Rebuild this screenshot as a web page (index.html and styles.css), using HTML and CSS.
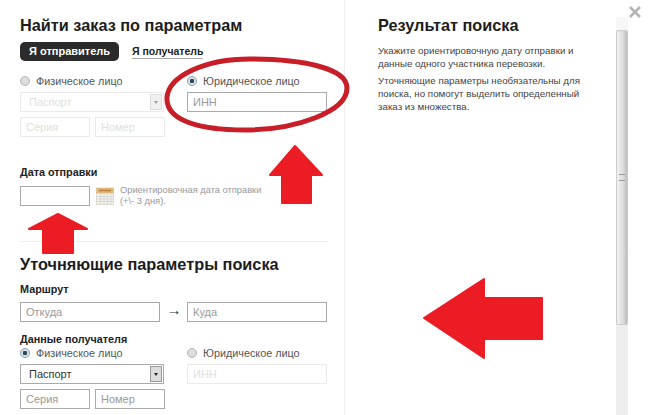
FILE: index.html
```html
<!DOCTYPE html>
<html>

<head>
  <title>Поиск заказа</title>
  <link rel="stylesheet" href="styles.css">
</head>

<body>
  <div class="dialog">
    <div class="search-form">
      <h1>Найти заказ по параметрам</h1>

      <div class="tabs">
        <span class="tab tab-active">Я отправитель</span>
        <span class="tab-link">Я получатель</span>
      </div>

      <div class="party-grid party-first">
        <div class="party">
          <div class="option option-off"><span class="radio"></span>Физическое лицо</div>
          <div class="select select-off">
            <span class="select-value">Паспорт</span>
            <span class="select-arrow"></span>
          </div>
          <div class="field-row">
            <input type="text" class="field field-off field-short" placeholder="Серия">
            <input type="text" class="field field-off field-short" placeholder="Номер">
          </div>
        </div>
        <div class="party">
          <div class="option"><span class="radio radio-on"></span>Юридическое лицо</div>
          <input type="text" class="field field-wide" placeholder="ИНН">
        </div>
      </div>

      <div class="label label-date">Дата отправки</div>
      <div class="date-row">
        <input type="text" class="field field-short">
        <svg class="calendar" width="18" height="18" viewBox="0 0 18 18">
          <rect x="0.5" y="1" width="17" height="16.5" fill="#f3f2ec" stroke="#dddad0" />
          <rect x="0.5" y="1" width="17" height="5.5" fill="#e0b878" />
          <path d="M3 3.500h12" stroke="#bd8040" stroke-width="1.5" />
          <path d="M1 9.500h16M1 12h16M1 14.500h16M4.500 7v10M8 7v10M11.500 7v10M15 7v10" stroke="#d8d8d8" stroke-width="1" />
        </svg>
        <div class="date-hint">Ориентировочная дата отправки<br>(+\- 3 дня).</div>
      </div>

      <div class="divider"></div>

      <h1 class="title-second">Уточняющие параметры поиска</h1>

      <div class="label label-route">Маршрут</div>
      <div class="route-row">
        <input type="text" class="field field-wide" placeholder="Откуда">
        <span class="route-arrow">→</span>
        <input type="text" class="field field-wide" placeholder="Куда">
      </div>

      <div class="label label-receiver">Данные получателя</div>
      <div class="party-grid">
        <div class="party">
          <div class="option"><span class="radio radio-on"></span>Физическое лицо</div>
          <div class="select">
            <span class="select-value">Паспорт</span>
            <span class="select-arrow"></span>
          </div>
          <div class="field-row">
            <input type="text" class="field field-short" placeholder="Серия">
            <input type="text" class="field field-short" placeholder="Номер">
          </div>
        </div>
        <div class="party">
          <div class="option option-off"><span class="radio"></span>Юридическое лицо</div>
          <input type="text" class="field field-off field-wide" placeholder="ИНН">
        </div>
      </div>
    </div>

    <div class="result">
      <h2>Результат поиска</h2>
      <p>Укажите ориентировочную дату отправки и данные одного участника перевозки.</p>
      <p>Уточняющие параметры необязательны для поиска, но помогут выделить определенный заказ из множества.</p>
    </div>

    <div class="scrollbar">
      <div class="scroll-btn"></div>
      <div class="scroll-thumb"><span class="scroll-grip"></span></div>
    </div>

    <div class="close-col">
      <svg width="12" height="12" viewBox="0 0 12 12">
        <path d="M1 1l10 10M11 1L1 11" stroke="#b3b3b3" stroke-width="2.500" />
      </svg>
    </div>
  </div>

  <!-- red marks drawn over the screenshot -->
  <svg class="marks" width="650" height="415" viewBox="0 0 650 415">
    <path class="ring" d="M167 98C168 76 205 59 250 59C302 59 347 68 347 88C347 112 295 130 245 130C198 130 166 120 167 98Z" />
    <path class="arrow" d="M295 146L322 175H311V203H282V175H270Z" />
    <path class="arrow" d="M58 214L87 229H73V253H43V229H29Z" />
    <path class="arrow" d="M424 318L484 279V298H542V339H484V358Z" />
  </svg>
</body>

</html>
```

FILE: styles.css
```css
body {
  margin: 0;
  width: 650px;
  height: 415px;
  overflow: hidden;
  position: relative;
  font-family: "Liberation Sans", Arial, sans-serif;
  color: #222;
  background-color: #fff;
}

h1 {
  font-size: 16.300px;
  line-height: 22px;
  font-weight: 700;
  margin: 0;
  color: #1c1c1c;
}

h2 {
  font-size: 16.300px;
  line-height: 22px;
  font-weight: 700;
  margin: 0 0 9px;
  color: #1c1c1c;
}

.dialog {
  display: flex;
  height: 415px;
}

.search-form {
  flex: none;
  width: 324px;
  padding: 14px 0 0 20px;
}

.tabs {
  display: flex;
  align-items: center;
  margin-top: 6px;
  gap: 13px;
}

.tab {
  font-size: 11px;
  font-weight: 700;
  line-height: 19px;
  padding: 0 9px;
}

.tab-active {
  color: #fff;
  background-color: #2b2b2b;
  border-radius: 5px;
}

.tab-link {
  font-size: 10.500px;
  font-weight: 700;
  line-height: 14px;
  border-bottom: 1px solid #aaa;
  color: #222;
}

.party-grid {
  display: grid;
  grid-template-columns: 144px 139px;
  column-gap: 23px;
}

.party-first {
  margin-top: 13px;
  height: 74px;
}

.option {
  display: flex;
  align-items: center;
  height: 14px;
  font-size: 10.800px;
  color: #555;
  margin-bottom: 4px;
}

.option-off .radio {
  background-color: #ddd;
}

.radio {
  width: 8px;
  height: 8px;
  border: 1px solid #b5b5b5;
  border-radius: 50%;
  margin-right: 6px;
}

.radio-on {
  background: radial-gradient(circle, #2d4a55 0, #2d4a55 2px, #d8e2e8 2.500px);
  border-color: #8aa0ad;
}

.field {
  display: block;
  box-sizing: border-box;
  height: 20px;
  padding: 0 5px;
  border: 1px solid #aaa;
  font-family: inherit;
  font-size: 11px;
  background-color: #fff;
}

.field::placeholder {
  color: #999;
}

.field-off {
  border-color: #eaeaea;
}

.field-off::placeholder {
  color: #e0e0e0;
}

.field-wide {
  width: 140px;
}

.field-short {
  width: 70px;
}

.field-row {
  display: flex;
  gap: 5px;
  margin-top: 5px;
}

.select {
  display: flex;
  align-items: center;
  justify-content: space-between;
  box-sizing: border-box;
  height: 20px;
  border: 1px solid #aaa;
  padding: 0 1px 0 8px;
}

.select-value {
  font-size: 11px;
  color: #333;
}

.select-arrow {
  width: 12px;
  height: 16px;
  background-color: #ddd;
  border: 1px solid #999;
  box-sizing: border-box;
  position: relative;
}

.select-arrow::after {
  content: "";
  position: absolute;
  left: 3px;
  top: 6px;
  border: 2.500px solid transparent;
  border-top: 3px solid #222;
}

.select-off {
  border-color: #eaeaea;
}

.select-off .select-value {
  color: #e0e0e0;
}

.select-off .select-arrow {
  background-color: #f0f0f0;
  border-color: #ddd;
}

.select-off .select-arrow::after {
  border-top-color: #999;
}

.label {
  font-size: 10.800px;
  font-weight: 700;
  line-height: 14px;
  color: #222;
}

.label-date {
  margin-top: 17px;
}

.date-row {
  display: flex;
  align-items: center;
  margin-top: 6px;
}

.calendar {
  margin-left: 6px;
}

.date-hint {
  margin-left: 6px;
  font-size: 9.300px;
  line-height: 11px;
  color: #999;
}

.divider {
  width: 308px;
  height: 1px;
  background-color: #eee;
  margin-top: 34px;
}

.title-second {
  margin-top: 11px;
}

.label-route {
  margin-top: 7px;
}

.route-row {
  display: flex;
  align-items: center;
  margin-top: 6px;
}

.route-arrow {
  width: 30px;
  margin-left: -1px;
  margin-right: -2px;
  margin-bottom: 5px;
  text-align: center;
  font-size: 15px;
  line-height: 15px;
  color: #333;
}

.label-receiver {
  margin-top: 10px;
}

.result {
  width: 238px;
  padding: 14px 0 0 33px;
  border-left: 1px solid #eee;
}

.result p {
  margin: 0 0 5px;
  width: 210px;
  font-size: 9.750px;
  line-height: 12.700px;
  color: #444;
}

.scrollbar {
  flex: none;
  width: 12px;
  margin-top: 17px;
  background-color: #eee;
}

.scroll-btn {
  height: 13px;
  background-color: #f7f7f7;
}

.scroll-thumb {
  height: 295px;
  background: linear-gradient(90deg, #f2f2f2, #d8d8d8 70%, #b8b8b8);
  border: 1px solid #ccc;
  border-radius: 2px;
  box-sizing: border-box;
  display: flex;
  align-items: center;
  justify-content: center;
}

.scroll-grip {
  width: 6px;
  height: 5px;
  border-top: 1px solid #999;
  border-bottom: 1px solid #999;
}

.close-col {
  flex: none;
  padding: 4px 0 0 1px;
}

.marks {
  position: absolute;
  left: 0;
  top: 0;
  pointer-events: none;
}

.ring {
  fill: none;
  stroke: #c81e28;
  stroke-width: 5;
}

.arrow {
  fill: #ec1c24;
  stroke: #ec1c24;
  stroke-width: 2;
  stroke-linejoin: round;
}
```
